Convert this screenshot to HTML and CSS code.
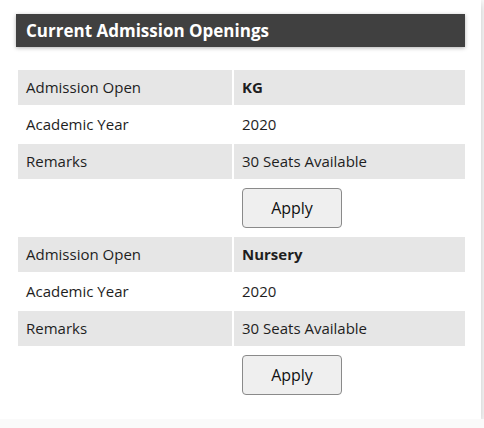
FILE: index.html
```html
<!DOCTYPE html>
<html lang="en">
<head>
  <meta charset="UTF-8">
  <meta name="viewport" content="width=device-width, initial-scale=1.0">
  <title>Current Admission Openings</title>
  <link rel="stylesheet" href="styles.css">
</head>
<body>
  <div class="card">
    <div class="card-title">Current Admission Openings</div>

    <table class="openings">
      <tbody>
        <tr class="shaded">
          <td class="label">Admission Open</td>
          <td class="class-name">KG</td>
        </tr>
        <tr>
          <td class="label">Academic Year</td>
          <td>2020</td>
        </tr>
        <tr class="shaded">
          <td class="label">Remarks</td>
          <td>30 Seats Available</td>
        </tr>
        <tr>
          <td></td>
          <td><button class="apply-button">Apply</button></td>
        </tr>
      </tbody>
      <tbody>
        <tr class="shaded">
          <td class="label">Admission Open</td>
          <td class="class-name">Nursery</td>
        </tr>
        <tr>
          <td class="label">Academic Year</td>
          <td>2020</td>
        </tr>
        <tr class="shaded">
          <td class="label">Remarks</td>
          <td>30 Seats Available</td>
        </tr>
        <tr>
          <td></td>
          <td><button class="apply-button">Apply</button></td>
        </tr>
      </tbody>
    </table>
  </div>
</body>
</html>
```

FILE: styles.css
```css
:root {
  --title-bg: #404040;
  --row-bg: #e6e6e6;
  --text-dark: #1e1e1e;
}

body {
  margin: 0;
  background-color: #fafafa;
  font-family: 'Open Sans', 'Noto Sans', sans-serif;
  color: var(--text-dark);
}

.card {
  width: 481px;
  height: 419px;
  box-sizing: border-box;
  padding: 14px 16px;
  background: #ffffff;
  box-shadow: 0 3px 8px rgba(0, 0, 0, 0.22);
}

.card-title {
  height: 33px;
  padding: 0 10px;
  box-sizing: border-box;
  line-height: 33px;
  background-color: var(--title-bg);
  color: #ffffff;
  font-size: 17px;
  font-weight: bold;
  box-shadow: 0 1px 4px rgba(0, 0, 0, 0.3);
}

.openings {
  width: 451px;
  margin-top: 21px;
  border-spacing: 2px;
  font-size: 15px;
}

.openings td {
  padding: 7px 8px;
  line-height: 21px;
}

.openings td.label {
  width: 198px;
}

.shaded td {
  background-color: var(--row-bg);
}

.class-name {
  font-weight: bold;
}

.apply-button {
  display: block;
  width: 100px;
  height: 40px;
  background-color: #efefef;
  border: 1px solid #8a8a8a;
  border-radius: 4px;
  font-family: inherit;
  font-size: 16px;
  color: #111;
  cursor: pointer;
}

.apply-button:hover {
  background-color: #e3e3e3;
}
```
